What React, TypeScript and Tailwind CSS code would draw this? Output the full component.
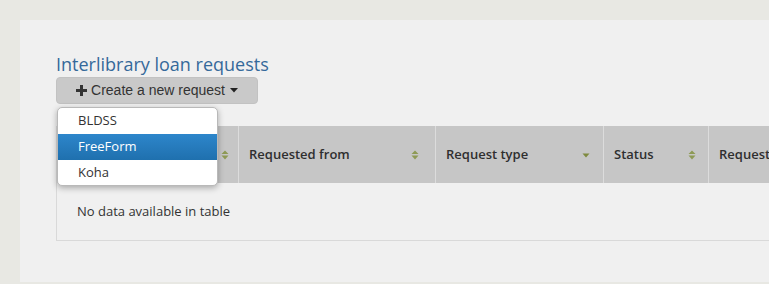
import type { ReactNode } from 'react';

type Column = {
  label: string;
  width: string;
  iconPad: string;
  sort: 'both' | 'desc';
};

// first column's label sits under the open menu, so it is left blank
const columns: Column[] = [
  { label: '', width: 'w-[182px]', iconPad: 'pr-[9px]', sort: 'both' },
  { label: 'Requested from', width: 'w-[197px]', iconPad: 'pr-[16px]', sort: 'both' },
  { label: 'Request type', width: 'w-[168px]', iconPad: 'pr-[13px]', sort: 'desc' },
  { label: 'Status', width: 'w-[105px]', iconPad: 'pr-[12px]', sort: 'both' },
  { label: 'Request date', width: 'w-[140px]', iconPad: 'pr-[12px]', sort: 'both' },
];

function SortIcon({ kind }: { kind: 'both' | 'desc' }) {
  if (kind === 'desc') {
    return (
      <svg width="8" height="10" viewBox="0 0 8 10" className="shrink-0">
        <path d="M0.5 3.5 L7.5 3.5 L4 7.5 Z" fill="#7f8a3f" />
      </svg>
    );
  }
  return (
    <svg width="8" height="10" viewBox="0 0 8 10" className="shrink-0">
      <path d="M4 0.5 L7.5 4 L0.5 4 Z" fill="#8e9a55" />
      <path d="M0.5 5.5 L7.5 5.5 L4 9.5 Z" fill="#8e9a55" />
    </svg>
  );
}

function HeaderCell({ col, children }: { col: Column; children: ReactNode }) {
  return (
    <div
      className={`${col.width} ${col.iconPad} flex shrink-0 items-center justify-between border-r border-[#dcdcdc] pl-[10px] text-[13px] font-semibold text-[#2f2f2f]`}
    >
      <span className="whitespace-nowrap">{children}</span>
      <SortIcon kind={col.sort} />
    </div>
  );
}

export default function App() {
  return (
    <div className="h-[284px] w-[769px] overflow-hidden bg-[#e8e8e3] pl-5 pt-5 font-['Open_Sans',sans-serif]">
      <div className="relative h-[262px] overflow-hidden bg-[#f0f0f0] pl-9 pt-[34px]">
        <h1 className="text-[18px] leading-[20px] font-normal text-[#35699a]">Interlibrary loan requests</h1>

        <button className="mt-[3px] flex h-[27px] w-[202px] items-center justify-center gap-[4px] rounded-[4px] border border-[#c2c2c2] bg-[#c9c9c9] font-['Liberation_Sans',Arial,sans-serif] text-[14px] text-[#333]">
          <svg width="11" height="11" viewBox="0 0 11 11">
            <path d="M4 0 H7 V4 H11 V7 H7 V11 H4 V7 H0 V4 H4 Z" fill="#333" />
          </svg>
          <span>Create a new request</span>
          <svg width="8" height="5" viewBox="0 0 8 5" className="ml-[1px]">
            <path d="M0 0 L8 0 L4 4.5 Z" fill="#222" />
          </svg>
        </button>

        <div className="mt-[22px] w-[900px] border-b border-l border-[#d9d9d9]">
          <div className="flex h-[57px] bg-[#c6c6c6]">
            {columns.map((col, i) => (
              <HeaderCell key={i} col={col}>
                {col.label}
              </HeaderCell>
            ))}
          </div>
          <div className="flex h-[57px] items-center pl-5 text-[13px] text-[#333]">No data available in table</div>
        </div>

        <ul className="absolute left-[37px] top-[87px] w-[161px] overflow-hidden rounded-[5px] border border-[#b9b9b9] bg-white text-[13px] text-[#333] shadow-[0_2px_6px_rgba(0,0,0,0.3)]">
          <li className="flex h-[26px] items-center pl-5">BLDSS</li>
          <li className="flex h-[26px] items-center bg-gradient-to-b from-[#2d86cb] to-[#1f70ae] pl-5 text-white">
            FreeForm
          </li>
          <li className="flex h-[25px] items-center pl-5">Koha</li>
        </ul>
      </div>
    </div>
  );
}
